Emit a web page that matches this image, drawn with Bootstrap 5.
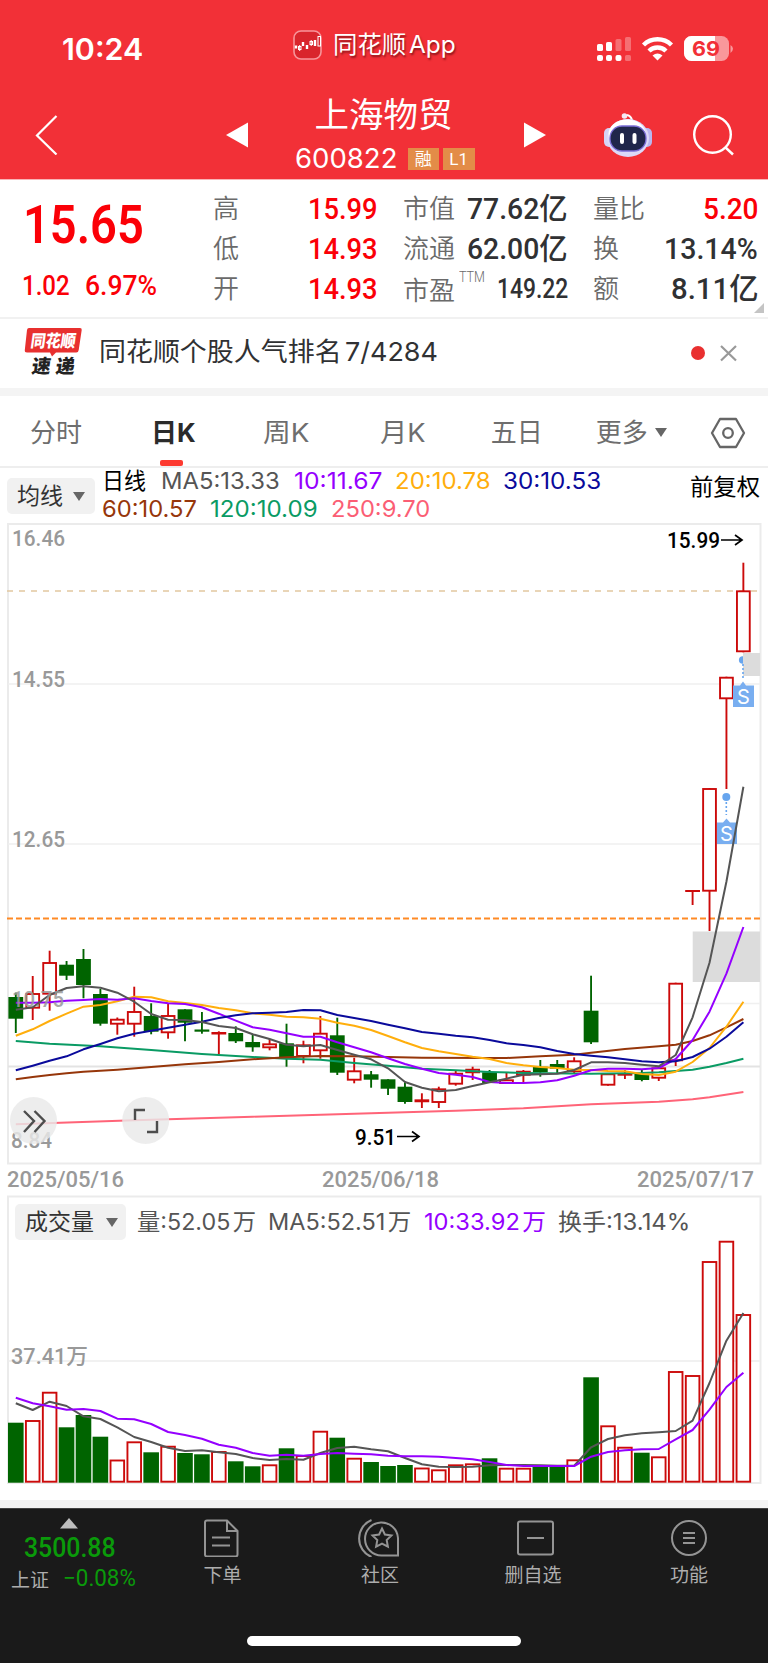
<!DOCTYPE html>
<html lang="zh-CN">
<head>
<meta charset="utf-8">
<meta name="viewport" content="width=device-width, initial-scale=1">
<title>上海物贸 600822</title>
<link href="https://cdn.jsdelivr.net/npm/bootstrap@5.3.0/dist/css/bootstrap.min.css" rel="stylesheet">
<style>
body{width:768px;height:1663px;margin:0;overflow:hidden;background:#fff;color:#303133;font-family:Roboto,"Noto Sans CJK SC",sans-serif;line-height:1;font-size:26px}
svg{display:block;flex:none}
.fit{display:inline-block;white-space:nowrap;transform-origin:0 50%;flex:none}
.sf{font-family:Inter,"Noto Sans CJK SC",sans-serif}
.top{background:#f23037;height:179px;color:#fff}
.status{height:98px;padding-left:62px}
.title-row{height:81px;padding:0 0 8px 35px}
.tag{height:22px;line-height:22px;background:#e38c48;font-size:17px;text-align:center}
.quote{height:140px;border-top:1px solid #f9b4b6;border-bottom:2px solid #f1f1f1}
.up{color:#fb0007}
.lbl{color:#6a6a6a;font-weight:350}
.stat{height:40px}
.num{font-size:30px;font-weight:500}
.news{height:69px;padding-left:24px}
.band{height:8px;background:#f4f4f4}
.tabs{height:72px;border-bottom:2px solid #eee;color:#6e6e6e;padding-top:3px}
.tab-on{color:#2b2b2b;font-weight:700;height:67px}
.tab-on i{width:23px;height:6px;border-radius:2px;background:#fd3a30;left:9px;bottom:0}
.ma{height:55px;font-size:23px}
.pick{background:#f1f1f1;border-radius:5px;height:36px;color:#333;font-size:23px}
.tri{width:0;height:0;border:6px solid transparent;border-top:9px solid #666;border-bottom:0}
.dark-bar{height:156px;background:#1a1a1a;border-top:1px solid #444;color:#adadad;font-size:19px}
.green{color:#0a9a0a}
.item svg{fill:none;stroke:#949494;stroke-width:2}
.home{width:274px;height:10px;border-radius:5px;background:#fff}
</style>
</head>
<body>
<header class="top">
  <div class="status d-flex align-items-center">
    <span class="fit sf fw-semibold" style="font-size:30px" data-w="81">10:24</span>
    <div class="d-flex align-items-center pb-2" style="margin-left:150px">
      <svg width="29" height="30" viewBox="0 0 29 30"><rect x="1" y="1" width="27" height="28" rx="7" fill="#d9252c" stroke="#f7959a" stroke-width="1.6"/><path d="M3 18.500v-3M10 16v-4M14 19v-4M22 16v-6" stroke="#fff" stroke-width="2.400"/><g fill="none" stroke="#fff" stroke-width="1"><rect x="5.500" y="16.500" width="2.500" height="3"/><rect x="17" y="11.500" width="2.500" height="3"/><path d="M6.700 15v6M18.200 10v6"/><rect x="25" y="6.500" width="2.500" height="9.500"/></g></svg>
      <span class="fit sf" style="font-size:24px;margin-left:11px;text-shadow:1px 2px 2px #8c141a;word-spacing:-4px" data-w="123">同花顺 App</span>
    </div>
    <svg style="margin-left:141px" width="140" height="28" viewBox="595 35 140 28" fill="#fff">
      <g><rect x="595" y="44" width="6" height="7" rx="1.6"/><rect x="604" y="42" width="6" height="9" rx="1.6"/><g opacity=".3"><rect x="613.500" y="39" width="6" height="12" rx="1.600"/><rect x="623" y="37" width="6" height="14" rx="1.600"/><rect x="623" y="55" width="6" height="6" rx="1.600"/></g><rect x="595" y="55" width="6" height="6" rx="2"/><rect x="604" y="55" width="6" height="6" rx="2"/><rect x="613.500" y="55" width="6" height="6" rx="2"/></g>
      <g fill="none" stroke="#fff" stroke-width="4.400"><path d="M641.500 45a20 20 0 0 1 28 0M647 51a12 12 0 0 1 17 0"/></g><path d="M650.500 55.500q5-4 10 0L655.500 60.500z"/>
      <rect x="682" y="36" width="45" height="25" rx="7.500" opacity=".5"/><path d="M713 36v25H689.500a7.500 7.500 0 0 1-7.500-7.500v-10a7.500 7.500 0 0 1 7.500-7.500z"/><path d="M728.500 45q5 3.500 0 8z" opacity=".5"/>
      <text x="690" y="56" textLength="28" lengthAdjust="spacingAndGlyphs" font-family="Inter" font-weight="700" font-size="20.500" fill="#f23037">69</text>
    </svg>
  </div>
  <div class="title-row d-flex align-items-center">
    <svg width="23" height="40" viewBox="0 0 23 40" fill="none" stroke="#fff" stroke-width="2.200"><path d="M21.500 1L2 20.500 21.500 39.500"/></svg>
    <svg style="margin-left:168px" width="22" height="26"><path d="M22 .5v25L0 13z" fill="#fff"/></svg>
    <div class="d-flex flex-column align-items-center" style="margin-left:49px;width:178px">
      <span style="font-size:34.500px;line-height:36px;margin:0 5px 12px 0;height:36px">上海物贸</span>
      <div class="d-flex align-items-center" style="margin-left:-2px">
        <span class="fit sf" style="font-size:27px" data-w="102">600822</span>
        <span class="tag" style="width:31px;margin-left:10px">融</span><span class="tag" style="width:32px;margin-left:4px">L1</span>
      </div>
    </div>
    <svg style="margin-left:49px" width="22" height="26"><path d="M0 .5v25L22 13z" fill="#fff"/></svg>
    <svg style="margin-left:57px" width="50" height="46" viewBox="603 111 50 46">
      <path d="M632 119q-1-4-5-5" fill="none" stroke="#fff" stroke-width="2"/><circle cx="624.500" cy="115" r="2.800" fill="#f5e9f4"/>
      <rect x="604" y="127" width="11" height="19" rx="5" fill="#d5d3f6"/><rect x="641" y="127" width="11" height="19" rx="5" fill="#b9b7ef"/>
      <ellipse cx="628" cy="137" rx="21" ry="19" fill="#dcd9f8"/><ellipse cx="627" cy="133" rx="18.500" ry="14.500" fill="#fff"/>
      <rect x="610" y="125" width="36" height="25" rx="12" fill="#20264a" stroke="#7b6ed6" stroke-width="1.300"/><path d="M622 134v7M634.500 134v7" stroke="#fff" stroke-width="4" stroke-linecap="round"/>
    </svg>
    <svg style="margin-left:39px" width="42" height="42" viewBox="691 114 42 42" fill="none" stroke="#fff" stroke-width="2.400"><circle cx="711.500" cy="134.500" r="18.300"/><path d="M724 147l8 7.500"/></svg>
  </div>
</header>

<section class="quote d-flex">
  <div style="width:190px;padding-left:23px">
    <div class="up fit" style="font-size:54px;font-weight:600;line-height:60px;margin-top:15px" data-w="121">15.65</div>
    <div class="up d-flex" style="font-size:28px;font-weight:500;margin-top:17px"><span class="fit" style="margin-left:-1px" data-w="48">1.02</span><span class="fit" style="margin-left:15px" data-w="72">6.97%</span></div>
  </div>
  <div style="width:188px;padding:9px 0 0 23px">
    <div class="stat d-flex align-items-center justify-content-between"><span class="lbl">高</span><span class="fit num up" data-w="70">15.99</span></div>
    <div class="stat d-flex align-items-center justify-content-between"><span class="lbl">低</span><span class="fit num up" data-w="70">14.93</span></div>
    <div class="stat d-flex align-items-center justify-content-between"><span class="lbl">开</span><span class="fit num up" data-w="70">14.93</span></div>
  </div>
  <div style="width:190px;padding:9px 0 0 25px">
    <div class="stat d-flex align-items-center justify-content-between"><span class="lbl">市值</span><span class="fit num" data-w="101">77.62亿</span></div>
    <div class="stat d-flex align-items-center justify-content-between"><span class="lbl">流通</span><span class="fit num" data-w="101">62.00亿</span></div>
    <div class="stat d-flex align-items-center justify-content-between"><span class="lbl d-flex" style="padding-top:4px">市盈<small class="fit" style="font-size:14px;margin:-8px 0 0 4px" data-w="26">TTM</small></span><span class="fit num" style="font-size:27px" data-w="71">149.22</span></div>
  </div>
  <div style="width:190px;padding:9px 0 0 25px">
    <div class="stat d-flex align-items-center justify-content-between"><span class="lbl">量比</span><span class="fit num up" data-w="56">5.20</span></div>
    <div class="stat d-flex align-items-center justify-content-between"><span class="lbl">换</span><span class="fit num" data-w="94">13.14%</span></div>
    <div class="stat d-flex align-items-center justify-content-between"><span class="lbl">额</span><span class="fit num" data-w="88">8.11亿</span></div>
  </div>
  <svg class="align-self-end mb-1" style="margin-left:-4px" width="10" height="10"><path d="M10 0v10H0z" fill="#c4c4c4"/></svg>
</section>

<section class="news d-flex align-items-center pb-1">
  <svg width="60" height="56" viewBox="24 325 60 56" font-family="Noto Sans CJK SC" font-weight="900">
    <path d="M29 329h51q2 0 1.700 2l-3 20q-.3 2.500-2.500 2.500H56l-4 4-2-4H27q-2.500 0-2.200-2.500l2.200-20q.3-2 2-2z" fill="#e8302f"/>
    <g transform="translate(30 347.500) skewX(-8)"><text textLength="45" lengthAdjust="spacingAndGlyphs" font-size="17" fill="#fff">同花顺</text></g>
    <g transform="translate(31 373.500) skewX(-8)"><text textLength="43" font-size="19" fill="#222">速递</text></g>
  </svg>
  <span class="fit sf" style="font-size:26px;margin-left:15px;padding-top:1px;word-spacing:-4px" data-w="339">同花顺个股人气排名 7/4284</span>
  <svg style="margin-left:252px" width="50" height="20" viewBox="690 342 50 20"><circle cx="698" cy="353" r="7" fill="#e93030"/><path d="M721 346l15 14.500M736 346l-15 14.500" stroke="#999" stroke-width="2.200"/></svg>
</section>
<div class="band"></div>

<nav class="tabs d-flex align-items-center">
  <span style="margin-left:30px">分时</span>
  <span class="tab-on position-relative d-flex align-items-center" style="margin-left:69px"><span class="fit sf" data-w="45">日K</span><i class="position-absolute"></i></span>
  <span class="fit sf" style="margin-left:67px" data-w="46">周K</span>
  <span class="fit sf" style="margin-left:71px" data-w="45">月K</span>
  <span style="margin-left:65px">五日</span>
  <span style="margin-left:53px">更多</span>
  <i class="tri" style="margin-left:7px"></i>
  <svg style="margin-left:43px" width="36" height="32" viewBox="0 0 36 32" fill="none" stroke="#666" stroke-width="2.300"><path d="M10 2h16l8 14-8 14H10L2 16z" stroke-linejoin="round"/><circle cx="18" cy="16" r="4.800"/></svg>
</nav>

<section class="ma d-flex sf">
  <div class="pick d-flex align-items-center" style="width:88px;margin:10px 0 0 7px;padding-left:10px">均线<i class="tri" style="margin-left:10px"></i></div>
  <div style="width:588px;margin-left:7px">
    <div class="d-flex align-items-center" style="height:27px;color:#000"><span class="fit" data-w="44">日线</span><span class="fit" style="color:#555;margin-left:15px" data-w="119">MA5:13.33</span><span class="fit" style="color:#9500ff;margin-left:14px" data-w="89">10:11.67</span><span class="fit" style="color:#ffae0c;margin-left:13px" data-w="96">20:10.78</span><span class="fit" style="color:#0a0a9b;margin-left:12px" data-w="98">30:10.53</span></div>
    <div class="d-flex align-items-center" style="height:28px"><span class="fit" style="color:#96360a" data-w="95">60:10.57</span><span class="fit" style="color:#0a9b64;margin-left:13px" data-w="108">120:10.09</span><span class="fit" style="color:#fb5e74;margin-left:13px" data-w="99">250:9.70</span></div>
  </div>
  <span class="fit" style="color:#000;margin-top:8px" data-w="70">前复权</span>
</section>

<svg id="kline" width="768" height="672" viewBox="0 523 768 672" font-family="Roboto">
  <g fill="none" stroke="#ebebeb" stroke-width="2"><rect x="8" y="524" width="752.500" height="639.500"/><path d="M8 684h752M8 844h752M8 1003.500h752" stroke="#f0f0f0" stroke-width="1.500"/><path d="M8 1066.500h752" stroke="#e3e3e3"/></g>
  <path d="M7 591h753" stroke="#e2c8a0" stroke-width="1.500" stroke-dasharray="6 6"/>
  <path d="M7 918.500h753" stroke="#ff8a24" stroke-width="2" stroke-dasharray="6 3"/>
  <g id="candles"></g>
  <g fill="#67a5ee"><circle cx="742.700" cy="660" r="3.800"/><circle cx="726.300" cy="797" r="4"/></g>
  <path d="M692.700 931.500H760v50.500h-67.300zM743 653h17v23h-17z" fill="#dcdcdc"/>
  <path d="M743 664v14M726.300 802v13" stroke="#67a5ee" stroke-width="1.600" stroke-dasharray="2 2"/>
  <path d="M733 685.500h7l3-4 3 4h8v21.500h-21zM717 822.500h6l3.500-4 3.500 4h7v21.500h-20z" fill="#79aef0"/>
  <g font-family="Inter" font-size="20" fill="#fff" text-anchor="middle"><text x="743.300" y="703.500">S</text><text x="726.500" y="841">S</text></g>
  <g id="lines" fill="none" stroke-width="2" stroke-linejoin="round"></g>
  <g fill="#999" font-size="22" font-weight="500">
    <text x="12" y="546" textLength="53" lengthAdjust="spacingAndGlyphs">16.46</text><text x="12" y="686.500" textLength="53" lengthAdjust="spacingAndGlyphs">14.55</text><text x="12" y="846.500" textLength="53" lengthAdjust="spacingAndGlyphs">12.65</text><text x="12" y="1007" textLength="52" lengthAdjust="spacingAndGlyphs" opacity=".85">10.75</text><text x="11" y="1147.500" textLength="41" lengthAdjust="spacingAndGlyphs">8.84</text>
    <text x="7" y="1186.500" textLength="117">2025/05/16</text><text x="322" y="1186.500" textLength="117">2025/06/18</text><text x="637" y="1186.500" textLength="117">2025/07/17</text>
  </g>
  <g fill="#000" font-size="22" font-weight="500"><text x="667" y="548" textLength="53" lengthAdjust="spacingAndGlyphs">15.99</text><text x="355" y="1144.500" textLength="41" lengthAdjust="spacingAndGlyphs">9.51</text></g>
  <path d="M721 540h21M735 535l7 5-7 5M397 1136.500h22M412 1131.500l7 5-7 5" fill="none" stroke="#000" stroke-width="1.700"/>
  <g fill="#e9e9e9" fill-opacity=".82"><circle cx="33.500" cy="1120.500" r="23.500"/><circle cx="145.700" cy="1120.500" r="23.500"/></g>
  <path d="M24 1111l10 10-10 11M34.500 1111l10 10-10 11M145 1110h-10v10M147 1132h10v-11" fill="none" stroke="#4d4d4d" stroke-width="2.400"/>
</svg>

<section class="position-relative" style="height:305px">
  <svg id="volume" width="768" height="305" viewBox="0 1195 768 305" font-family="Roboto">
    <rect x="8" y="1196.500" width="752.500" height="286.500" fill="none" stroke="#ebebeb" stroke-width="2"/><path d="M8 1361h752" stroke="#ededed" stroke-width="1.500"/>
    <g id="bars"></g><g id="vlines" fill="none" stroke-width="2" stroke-linejoin="round"></g>
    <text x="11" y="1364" textLength="77" lengthAdjust="spacingAndGlyphs" fill="#999" font-size="22" font-weight="500" font-family="Roboto, Noto Sans CJK SC">37.41万</text>
  </svg>
  <div class="position-absolute top-0 start-0 d-flex align-items-center sf" style="height:54px;font-size:22.500px;color:#555;padding-left:15px">
    <div class="pick d-flex align-items-center" style="width:111px;padding-left:10px">成交量<i class="tri" style="margin-left:12px"></i></div>
    <span class="fit" style="margin-left:11px;word-spacing:-4px" data-w="119">量:52.05 万</span><span class="fit" style="margin-left:12px;word-spacing:-4px" data-w="143">MA5:52.51 万</span><span class="fit" style="margin-left:13px;color:#9500ff;word-spacing:-4px" data-w="122">10:33.92 万</span><span class="fit" style="margin-left:12px" data-w="132">换手:13.14%</span>
  </div>
</section>
<div class="band"></div>

<footer class="dark-bar d-flex flex-column justify-content-between align-items-center">
  <div class="d-flex w-100">
    <div style="width:191px;padding-left:11px">
      <svg style="margin:9px 0 0 49px" width="18" height="11"><path d="M9 0l9 10.500H0z" fill="#bdbdbd"/></svg>
      <div class="fit green" style="font-size:27px;margin:6px 0 0 13px;font-weight:500" data-w="92">3500.88</div>
      <div class="d-flex align-items-center" style="margin-top:8px"><span>上证</span><span class="fit green" style="font-size:23px;margin:-3px 0 0 14px" data-w="73">−0.08%</span></div>
    </div>
    <div class="item d-flex flex-column align-items-center" style="width:63px"><svg width="36" height="38" style="margin:10px 3px 9px 0" viewBox="203 1518 36 38"><path d="M227 1519.500H207q-2 0-2 2v32q0 2 2 2h28.500q2 0 2-2V1530zM227 1519.500V1530h10.500M212 1536.500h18M212 1544.500h18"/></svg><span>下单</span></div>
    <div class="item d-flex flex-column align-items-center" style="width:62px;margin-left:95px"><svg width="42" height="38" style="margin:10px 3px 9px 0" viewBox="357 1518 42 38"><path d="M397 1554.500V1537a16.500 16.500 0 1 0-16.500 17.500zM370.500 1519a20 20 0 0 0 0 37M381 1527.500l2.900 6 6.600 1-4.800 4.600 1.200 6.600-5.900-3.100-5.900 3.100 1.200-6.600-4.800-4.600 6.600-1z"/></svg><span>社区</span></div>
    <div class="item d-flex flex-column align-items-center" style="width:80px;margin-left:82px"><svg width="38" height="38" style="margin:10px 0 9px 4px" viewBox="516 1519 38 38"><rect x="518" y="1521.500" width="35" height="33" rx="2"/><path d="M527 1538h17"/></svg><span>删自选</span></div>
    <div class="item d-flex flex-column align-items-center" style="width:60px;margin-left:86px"><svg width="38" height="38" style="margin:10px 0 9px" viewBox="670 1519 38 38"><circle cx="689" cy="1538" r="17"/><path d="M683 1533h12M683 1538h12M683 1543h12"/></svg><span>功能</span></div>
  </div>
  <div class="home" style="margin-bottom:18px"></div>
</footer>

<script src="https://cdn.jsdelivr.net/npm/bootstrap@5.3.0/dist/js/bootstrap.bundle.min.js"></script>
<script>
// Condense or widen each label to the width of its column
document.querySelectorAll('.fit').forEach(e=>{
  const n=e.offsetWidth,w=+e.dataset.w;
  e.style.transform=`scaleX(${w/n})`;
  e.style.marginRight=(w-n)+'px';
});
const X=i=>15.8+16.92*i, RED='#cc0a0a', GREEN='#006400';
// direction, then high, open/close top, open/close bottom, low
const K=`G 992.7 997 1018.7 1033|R 976 993 1008.7 1020|R 950.7 962 994.7 1010.7|G 961 964.7 975.7 980|G 949 959 985 998.3|G 989 994 1023.7 1025.7|R 1017.5 1018.7 1024.7 1034.7|R 986.7 1011 1024.7 1036.7|G 1003.3 1016 1031.7 1034.3|R 1003.3 1015 1033.3 1038.7|G 1009.3 1009.3 1022.7 1041.3|G 1012 1029.5 1031.7 1033.7|R 1031.3 1032 1034.5 1054.3|G 1026.3 1033 1041.3 1043|G 1034.3 1042 1047.3 1051.7|R 1039 1043.3 1048.3 1050.3|G 1023.7 1043.3 1057.7 1066.7|R 1040.7 1044.3 1057 1063.3|R 1016 1032.7 1051.3 1058.7|G 1017.7 1035.3 1072.7 1075|R 1057.7 1070.3 1080.7 1083.3|G 1071 1074.3 1079.7 1087.7|G 1079.3 1079.3 1088.7 1095|G 1082.3 1086.7 1102 1103.7|R 1093.3 1099.3 1102.3 1108|R 1086.7 1088.3 1103 1108|R 1070.7 1072.7 1084.7 1085.7|R 1066.7 1068.7 1073.3 1080|G 1070 1072.3 1083 1083|R 1072.7 1079.3 1084 1084|R 1070 1070.7 1075.7 1082.7|G 1060 1066.7 1072.3 1076.7|G 1060 1064 1068.7 1074|R 1057.3 1060.3 1072.3 1073.3|G 975.7 1010.7 1042.3 1044|R 1073.3 1073.3 1085.7 1085.7|R 1070 1073.7 1075.7 1079|G 1069.3 1074 1080 1081.3|R 1066.7 1067.3 1078.7 1081|R 982.7 982.7 1061.3 1066|R 890 890 892 905|R 788 788 891.7 931|R 676.7 676.7 699.3 789|R 562.7 590.3 652.3 652.3`.split('|').map(s=>s.split(' '));
const V=[1422.7,1420,1391.7,1427.3,1415,1436.7,1459.5,1441.3,1452.3,1445.7,1453,1454.3,1451,1461.3,1466.3,1464.3,1448.3,1455,1430.7,1437.7,1457.7,1462,1466,1465,1467.5,1469.3,1464.3,1463.3,1458.3,1467.7,1467.7,1466.7,1466.7,1459.3,1377.3,1425.3,1446.7,1452.7,1456.3,1371,1375,1261,1240.7,1314];
const box=(i,t,b,up,w)=>{
  const h=b-t,x=X(i)-w/2;
  return up&&h>2.6?`<rect x="${x+1}" y="${t+1}" width="${w-2}" height="${h-2}" fill="#fff" stroke="${RED}" stroke-width="1.9"/>`
    :`<rect x="${x}" y="${t}" width="${w}" height="${h}" fill="${up?RED:GREEN}"/>`;
};
candles.innerHTML=K.map(([d,h,t,b,l],i)=>`<path d="M${X(i)} ${h}V${l}" stroke="${d=='R'?RED:GREEN}" stroke-width="1.9"/>`+box(i,+t,+b,d=='R',14.8)).join('');
bars.innerHTML=V.map((t,i)=>box(i,t,1482.7,K[i][0]=='R',15.6)).join('');
// Averages are kept in thirds of a pixel below the base line; gaps are joined straight
const line=(c,base,a)=>`<polyline stroke="${c}" points="${a.map((v,i)=>v==null?'':X(i).toFixed(1)+','+(base+v/3).toFixed(1)).join(' ')}"/>`;
const _=null;
lines.innerHTML=
 line('#ff6478',920,[613,_,_,_,_,_,_,601,_,_,_,_,_,_,590,_,_,_,_,_,581,_,_,_,_,_,572,_,_,_,565,_,_,_,553,_,_,_,545,_,538,532,_,516])+
 line('#0a9b64',920,[363,_,371,_,_,379,_,_,390,_,_,402,_,_,411,_,416,_,419,_,429,_,437,_,446,_,451,_,456,_,459,_,_,_,461,_,_,459,457,453,449,440,429,416])+
 line('#96360a',920,[478,471,465,460,455,_,449,_,441,_,433,_,426,_,418,_,412,_,408,_,409,_,411,_,413,_,_,_,414,414,_,409,_,404,398,_,387,_,379,374,363,346,322,297])+
 line('#ffae0c',920,[347,328,303,281,260,255,244,230,232,244,249,255,264,271,280,284,290,292,296,308,317,330,348,367,384,394,402,410,417,429,436,441,444,449,450,453,454,462,465,455,426,384,320,245])+
 line('#9500ff',920,[248,248,247,242,240,237,239,235,243,250,252,262,281,302,322,329,340,350,350,367,382,397,415,432,446,459,464,471,486,489,489,487,481,467,451,446,446,448,444,417,360,275,161,21])+
 line('#0a0a9b',920,[451,437,422,409,388,372,355,341,332,323,314,305,294,286,280,278,276,270,271,285,294,303,314,325,336,341,347,352,360,370,375,382,393,402,407,412,418,424,427,424,411,386,350,307])+
 line('#555',920,[269,262,225,204,199,203,218,245,282,299,300,306,318,324,343,357,374,379,375,390,404,418,445,486,503,514,510,498,487,476,464,463,461,450,427,427,429,434,439,405,292,128,-115,-400]);
vlines.innerHTML=
 line('#555',1220,[550,570,545,558,589,597,622,651,666,683,693,691,697,702,714,720,717,719,699,684,680,688,694,714,733,740,741,740,736,735,735,736,737,737,682,657,646,640,637,633,602,489,362,279])+
 line('#9500ff',1220,[533,550,559,569,567,573,596,598,612,636,645,656,674,683,699,707,704,707,702,699,701,703,707,709,709,710,714,718,726,735,738,738,738,738,710,696,691,688,687,658,630,569,501,458]);
</script>
</body>
</html>
